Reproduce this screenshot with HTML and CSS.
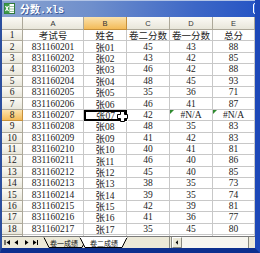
FILE: index.html
```html
<!DOCTYPE html>
<html lang="zh">
<head>
  <meta charset="UTF-8">
  <title>分数.xls</title>
  <link rel="stylesheet" href="styles.css">
</head>
<body>

  <div class="Janela">
    <div class="JanelaTitulo">
      <svg class="JanelaIcone" width="11" height="11" viewBox="0 0 11 11">
        <rect x="0.5" y="0.5" width="10" height="10" fill="#fff" stroke="#2f7a3a"/>
        <rect x="0.5" y="0.5" width="5" height="10" fill="#3c9a47"/>
        <path d="M1.5 3 L4.5 8 M4.5 3 L1.5 8" stroke="#fff" stroke-width="1.2"/>
        <path d="M6 3.5 H10 M6 6 H10 M6 8.5 H10" stroke="#7fb487" stroke-width="0.8"/>
      </svg>
      <span class="JanelaNome">分数.xls</span>
      <span class="JanelaBotao"></span>
    </div>

    <div class="Planilha">
      <div class="Grade">
        <div class="Canto"></div>
        <div class="ColCab">A</div>
        <div class="ColCab ColCab-ativa">B</div>
        <div class="ColCab">C</div>
        <div class="ColCab">D</div>
        <div class="ColCab">E</div>

        <div class="LinCab">1</div><div class="Cel">考试号</div><div class="Cel">姓名</div><div class="Cel">卷二分数</div><div class="Cel">卷一分数</div><div class="Cel">总分</div>
        <div class="LinCab">2</div><div class="Cel">831160201</div><div class="Cel">张01</div><div class="Cel">45</div><div class="Cel">43</div><div class="Cel">88</div>
        <div class="LinCab">3</div><div class="Cel">831160202</div><div class="Cel">张02</div><div class="Cel">43</div><div class="Cel">42</div><div class="Cel">85</div>
        <div class="LinCab">4</div><div class="Cel">831160203</div><div class="Cel">张03</div><div class="Cel">46</div><div class="Cel">42</div><div class="Cel">88</div>
        <div class="LinCab">5</div><div class="Cel">831160204</div><div class="Cel">张04</div><div class="Cel">48</div><div class="Cel">45</div><div class="Cel">93</div>
        <div class="LinCab">6</div><div class="Cel">831160205</div><div class="Cel">张05</div><div class="Cel">35</div><div class="Cel">36</div><div class="Cel">71</div>
        <div class="LinCab">7</div><div class="Cel">831160206</div><div class="Cel">张06</div><div class="Cel">46</div><div class="Cel">41</div><div class="Cel">87</div>
        <div class="LinCab LinCab-ativa">8</div><div class="Cel">831160207</div><div class="Cel Cel-ativa">张07<span class="Alca"></span></div><div class="Cel">42</div><div class="Cel Cel-erro">#N/A</div><div class="Cel Cel-erro">#N/A</div>
        <div class="LinCab">9</div><div class="Cel">831160208</div><div class="Cel">张08</div><div class="Cel">48</div><div class="Cel">35</div><div class="Cel">83</div>
        <div class="LinCab">10</div><div class="Cel">831160209</div><div class="Cel">张09</div><div class="Cel">41</div><div class="Cel">42</div><div class="Cel">83</div>
        <div class="LinCab">11</div><div class="Cel">831160210</div><div class="Cel">张10</div><div class="Cel">40</div><div class="Cel">41</div><div class="Cel">81</div>
        <div class="LinCab">12</div><div class="Cel">831160211</div><div class="Cel">张11</div><div class="Cel">46</div><div class="Cel">40</div><div class="Cel">86</div>
        <div class="LinCab">13</div><div class="Cel">831160212</div><div class="Cel">张12</div><div class="Cel">45</div><div class="Cel">40</div><div class="Cel">85</div>
        <div class="LinCab">14</div><div class="Cel">831160213</div><div class="Cel">张13</div><div class="Cel">38</div><div class="Cel">35</div><div class="Cel">73</div>
        <div class="LinCab">15</div><div class="Cel">831160214</div><div class="Cel">张14</div><div class="Cel">39</div><div class="Cel">35</div><div class="Cel">74</div>
        <div class="LinCab">16</div><div class="Cel">831160215</div><div class="Cel">张15</div><div class="Cel">42</div><div class="Cel">39</div><div class="Cel">81</div>
        <div class="LinCab">17</div><div class="Cel">831160216</div><div class="Cel">张16</div><div class="Cel">41</div><div class="Cel">36</div><div class="Cel">77</div>
        <div class="LinCab">18</div><div class="Cel">831160217</div><div class="Cel">张17</div><div class="Cel">35</div><div class="Cel">45</div><div class="Cel">80</div>
        <div class="LinCab">19</div><div class="Cel">831160218</div><div class="Cel">张18</div><div class="Cel">47</div><div class="Cel">37</div><div class="Cel">84</div>
      </div>

      <!-- cursor em cruz sobre a celula ativa -->
      <svg class="Cursor" width="11" height="11" viewBox="0 0 11 11">
        <path d="M3.5 0.5 H7.5 V3.5 H10.5 V7.5 H7.5 V10.5 H3.5 V7.5 H0.5 V3.5 H3.5 Z" fill="#fff" stroke="#000"/>
      </svg>
    </div>

    <div class="Abas">
      <svg class="AbasNav" width="40" height="11" viewBox="0 0 40 11">
        <path d="M3 3 V8" stroke="#000"/>
        <path d="M8 3 L4.5 5.5 L8 8 Z" fill="#000"/>
        <path d="M16 3 L12.5 5.5 L16 8 Z" fill="#000"/>
        <path d="M23 3 L26.5 5.5 L23 8 Z" fill="#000"/>
        <path d="M31 3 L34.5 5.5 L31 8 Z" fill="#000"/>
        <path d="M35.5 3 V8" stroke="#000"/>
      </svg>
      <svg class="AbasLista" width="90" height="11" viewBox="0 0 90 11">
        <path d="M2 0.5 L7 10.5 L40 10.5 L45 0.5" fill="#ece9d8" stroke="#000"/>
        <path d="M38 0.5 L43 10.5 L80 10.5 L85 0.5" fill="#fff" stroke="#000"/>
        <path d="M38 0.5 H85" stroke="#fff"/>
        <text x="22" y="8.5" class="AbaTexto">卷一成绩</text>
        <text x="62" y="8.5" class="AbaTexto">卷二成绩</text>
      </svg>
      <div class="AbasVazio"></div>
      <div class="Rolagem">
        <span class="RolagemBotao">
          <svg width="9" height="9" viewBox="0 0 9 9"><path d="M5.5 2 L3 4.5 L5.5 7 Z" fill="#000"/></svg>
        </span>
        <span class="RolagemTrilho"></span>
      </div>
    </div>
  </div>

</body>
</html>
```
FILE: styles.css
```css
html, body {
  margin: 0;
  padding: 0;
  background: #0b2a82;
}
.Janela {
  width: 260px;
  height: 253px;
  display: flex;
  flex-direction: column;
  box-sizing: border-box;
  border-left: 2px solid #2c4f9e;
  border-right: 5px solid #1d48b8;
  border-bottom: 5px solid #0d2f8e;
  background: #ece9d8;
  overflow: hidden;
}
.JanelaTitulo {
  height: 17px;
  flex: none;
  display: flex;
  align-items: center;
  margin: 0 -5px 0 -2px;
  padding-left: 4px;
  background: linear-gradient(90deg, #8aa3cf 0%, #6f8fcc 35%, #3d67c6 75%, #2454c4 100%);
  box-shadow: inset 0 1px 0 #b3c5e6;
}
.JanelaIcone {
  flex: none;
}
.JanelaNome {
  margin-left: 5px;
  color: #fff;
  font: bold 10px "Liberation Mono", "Noto Sans CJK SC", monospace;
  text-shadow: 1px 1px 0 #3a5a9a;
}
.JanelaBotao {
  margin-left: auto;
  width: 10px;
  height: 11px;
  margin-right: -3px;
  box-sizing: border-box;
  border: 1px solid #fff;
  border-radius: 2px;
  background: #3a6fe0;
}

.Planilha {
  position: relative;
  flex: 1;
  overflow: hidden;
  background: #fff;
}
.Grade {
  display: grid;
  grid-template-columns: 21px 61px 43px 43px 43px 42px;
  grid-template-rows: 13px repeat(19, 11.4px);
  font: 9.5px "Liberation Serif", "Noto Sans CJK SC", serif;
  color: #222;
}
.Grade > div {
  box-sizing: border-box;
  display: flex;
  align-items: center;
  justify-content: center;
  white-space: nowrap;
  overflow: hidden;
}
.Canto, .ColCab, .LinCab {
  background: linear-gradient(#fbfaf5, #e8e6da);
  border-right: 1px solid #aca899;
  border-bottom: 1px solid #aca899;
}
.ColCab {
  font: 7.5px "Liberation Sans", sans-serif;
  color: #333;
}
.ColCab-ativa, .LinCab-ativa {
  background: linear-gradient(#fbe2ad, #f3bb58);
  border-right-color: #c6903a;
  border-bottom-color: #c6903a;
}
.Cel {
  border-right: 1px solid #c8c8c8;
  border-bottom: 1px solid #c8c8c8;
}
.Grade > .Cel-ativa {
  position: relative;
  overflow: visible;
  border: 2px solid #000;
}
.Alca {
  position: absolute;
  right: -3px;
  bottom: -3px;
  width: 4px;
  height: 4px;
  background: #000;
  border: 1px solid #fff;
}
.Grade > .Cel-erro {
  position: relative;
  overflow: visible;
}
.Cel-erro::before {
  content: "";
  position: absolute;
  left: 0;
  top: 0;
  border-top: 4px solid #2f8a2f;
  border-right: 4px solid transparent;
}
.Cursor {
  position: absolute;
  left: 115px;
  top: 94px;
}

.Abas {
  height: 11px;
  flex: none;
  display: flex;
  align-items: stretch;
  border-top: 1px solid #7b7b7b;
  background: #ece9d8;
}
.AbasNav, .AbasLista {
  flex: none;
}
.AbaTexto {
  font: 7px "Noto Sans CJK SC", sans-serif;
  fill: #111;
  text-anchor: middle;
}
.AbasVazio {
  flex: 1;
}
.Rolagem {
  width: 83px;
  display: flex;
  border-left: 3px double #8a8a80;
}
.RolagemBotao {
  width: 10px;
  box-sizing: border-box;
  border: 1px solid #fff;
  border-right-color: #8a8a80;
  border-bottom-color: #8a8a80;
  display: flex;
  align-items: center;
  justify-content: center;
  background: #ece9d8;
}
.RolagemTrilho {
  flex: 1;
  background: #f7f6f0;
  border-right: 1px solid #8a8a80;
  margin-right: 6px;
}
```
